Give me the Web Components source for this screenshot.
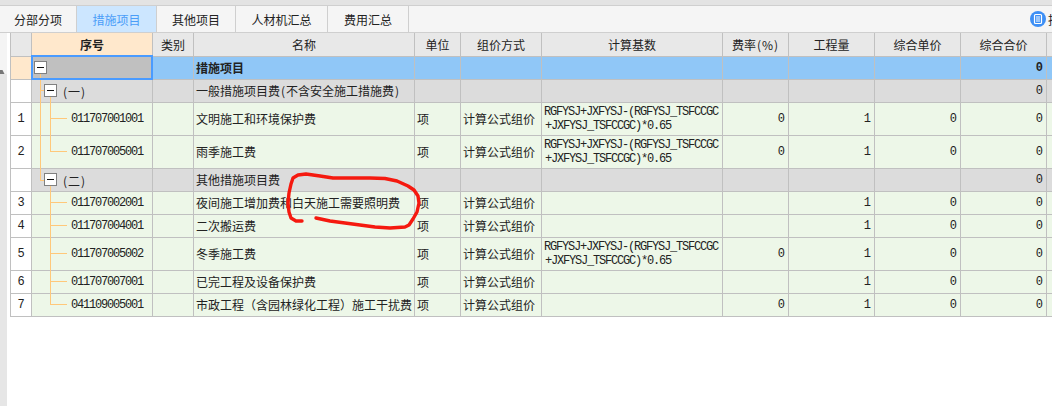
<!DOCTYPE html>
<html><head><meta charset="utf-8">
<style>
html,body{margin:0;padding:0;background:#fff;}
body{font:12px "Noto Sans CJK SC","Liberation Sans",sans-serif;color:#222;width:1052px;height:406px;overflow:hidden;
--cols:21px 121px 41px 221px 46px 81px 181px 66px 86px 86px 86px 5px;}
</style></head><body>
<app-shell>
  <tab-bar>
    <tab-item style="--w:77px">分部分项</tab-item>
    <tab-item active style="--w:80px">措施项目</tab-item>
    <tab-item style="--w:79px">其他项目</tab-item>
    <tab-item style="--w:92px">人材机汇总</tab-item>
    <tab-item style="--w:81px">费用汇总</tab-item>
  </tab-bar>
  <work-area></work-area>
</app-shell>
<script>
class AppShell extends HTMLElement{constructor(){super();this.attachShadow({mode:'open'}).innerHTML=`<style>:host{display:flex;flex-direction:column;width:1052px;height:406px;overflow:hidden}</style><slot></slot>`;}}
class TabBar extends HTMLElement{constructor(){super();this.attachShadow({mode:'open'}).innerHTML=`<style>
:host{display:block;background:#e3e3e3;padding-top:5px}
.bar{display:flex;height:26px;background:#f5f5f5;border-top:1px solid #cfcfcf;border-bottom:1px solid #cfcfcf;align-items:stretch;overflow:hidden}
.tabs{display:flex;flex:1}
.tail{display:flex;align-items:center;gap:2px;width:22px;flex:none;font-size:12px;white-space:nowrap;overflow:hidden;color:#222;box-sizing:border-box}
svg{flex:none;display:block}
</style><div class="bar"><div class="tabs"><slot></slot></div><div class="tail"><svg width="16" height="16" viewBox="0 0 16 16"><circle cx="8" cy="8" r="8" fill="#3d8ff5"/><rect x="4.5" y="3.5" width="7" height="9" rx="1" fill="none" stroke="#fff" stroke-width="1.2"/><path d="M6 6h4M6 8h4M6 10h4" stroke="#fff" stroke-width="1"/></svg><span>指</span></div></div>`;}}
class TabItem extends HTMLElement{constructor(){super();this.attachShadow({mode:'open'}).innerHTML=`<style>
:host{display:flex;align-items:center;justify-content:center;box-sizing:border-box;width:var(--w);border-right:1px solid #cfcfcf;color:#222;font-size:12px;}
:host([active]){background:#cce6ff;color:#4a9df8}
</style><slot></slot>`;}}
class WorkArea extends HTMLElement{constructor(){super();this.attachShadow({mode:'open'}).innerHTML=`<style>
:host{display:flex;flex:1;min-height:0}
.strip{width:7px;flex:none;display:flex;flex-direction:column}
.up{height:37px;background:#f4f4f4;flex:none}
.tri{height:4px;flex:none;background:#f4f4f4}
.down{flex:1;background:#e6e6e6}
.gap{width:3px;flex:none}
svg{display:block}
</style><div class="strip"><div class="up"></div><div class="tri"><svg width="5" height="4" viewBox="0 0 5 4"><path d="M0 4H4.500L2.500 0H0Z" fill="#777"/></svg></div><div class="down"></div></div><div class="gap"></div><measure-grid></measure-grid>`;}}
const N='计算公式组价';
const F1='RGFYSJ+JXFYSJ-(RGFYSJ_TSFCCGC',F2='+JXFYSJ_TSFCCGC)*0.65';
const P=s=>s.replace(/[()]/g,m=>`<span class="p">${m}</span>`);
const ROWS=[
 {k:'total',h:23,name:'措施项目',tot:'0'},
 {k:'group',h:23,code:'(一)',name:'一般措施项目费(不含安全施工措施费)',tot:'0'},
 {k:'item',h:33,n:'1',code:'011707001001',name:'文明施工和环境保护费',f:1,rate:'0',qty:'1'},
 {k:'item',h:33,n:'2',code:'011707005001',name:'雨季施工费',f:1,rate:'0',qty:'1'},
 {k:'group',h:23,code:'(二)',name:'其他措施项目费',tot:'0'},
 {k:'item',h:23,n:'3',code:'011707002001',name:'夜间施工增加费和白天施工需要照明费',qty:'1'},
 {k:'item',h:23,n:'4',code:'011707004001',name:'二次搬运费',qty:'1'},
 {k:'item',h:33,n:'5',code:'011707005002',name:'冬季施工费',f:1,rate:'0',qty:'1'},
 {k:'item',h:23,n:'6',code:'011707007001',name:'已完工程及设备保护费',qty:'1'},
 {k:'item',h:23,n:'7',code:'041109005001',name:'市政工程（含园林绿化工程）施工干扰费',rate:'0',qty:'1'}
];
class MeasureGrid extends HTMLElement{constructor(){super();const r=this.attachShadow({mode:'open'});
 r.innerHTML=`<style>
:host{display:block;position:relative;flex:1;min-width:0}
.frame{border-left:1px solid #c0c0c0}
svg{position:absolute;left:0;top:0;pointer-events:none}
</style><div class="frame"><grid-row kind="head" style="--h:24px"></grid-row></div>
<svg width="1042" height="300" viewBox="10 33 1042 300">
<g fill="none" stroke="#ffc87a" stroke-width="1" shape-rendering="crispEdges">
<path d="M40.500 74V180.500H44M40.500 90.500H44"/>
<path d="M50.500 97V151.500H67M50.500 118.500H67"/>
<path d="M50.500 186V304.500H67M50.500 202.500H67M50.500 225.500H67M50.500 253.500H67M50.500 281.500H67"/>
</g>
<rect x="32" y="56" width="120" height="23" fill="none" stroke="#4a9bff" stroke-width="2"/>
${[[34,61],[44,84],[44,173]].map(([x,y])=>`<rect x="${x+.5}" y="${y+.5}" width="12" height="12" fill="#fff" stroke="#808080"/><path d="M${x+3} ${y+6.5}h7" stroke="#111" shape-rendering="crispEdges"/>`).join('')}
<polyline points="302,221 296,221 291,218 289,212 288,203 289,193 291,184 293,178 298,175 306,174 320,176 333,178 350,178 370,178 385,178.500 397,181 408,186 414,190 418,196 419,203 417,212 413,219 409,225 405,227 390,228 375,227 360,225 345,223 330,221 316,218" fill="none" stroke="#f5190f" stroke-width="3.4" stroke-linejoin="round" stroke-linecap="round"/>
</svg>`;
 const frame=r.querySelector('.frame');
 ROWS.forEach(d=>{const e=document.createElement('grid-row');e.setAttribute('kind',d.k);e.style.setProperty('--h',d.h+'px');e.data=d;frame.appendChild(e);});
}}
class GridRow extends HTMLElement{
 connectedCallback(){
  const k=this.getAttribute('kind');const d=this.data||{};
  const r=this.shadowRoot||this.attachShadow({mode:'open'});
  let cells;
  if(k==='head'){
   cells=['','序号','类别','名称','单位','组价方式','计算基数','费率(%)','工程量','综合单价','综合合价',''].map((t,i)=>`<div class="c hd ${i==1?'seq':''}">${P(t)}</div>`).join('');
  }else{
   const formula=d.f?`<div class="f">${F1}<br><span class="f2">${F2}</span></div>`:'';
   const isItem=k==='item';
   cells=`<div class="c no ${k==='total'?'sel':''}">${d.n||''}</div>
   <div class="c code ${k}">${d.code?P(d.code):''}</div><div class="c"></div>
   <div class="c l name">${P(d.name)}</div>
   <div class="c l">${isItem?'项':''}</div>
   <div class="c l">${isItem?N:''}</div>
   <div class="c fc">${formula}</div>
   <div class="c r">${d.rate||''}</div>
   <div class="c r">${d.qty||''}</div>
   <div class="c r">${isItem?'0':''}</div>
   <div class="c r">${isItem?'0':d.tot}</div>
   <div class="c end"></div>`;
  }
  r.innerHTML=`<style>
:host{display:grid;grid-template-columns:var(--cols);height:var(--h,23px);color:#222;font-size:12px}
:host([kind=total]){--bg:#90c7f7;font-weight:bold}
:host([kind=group]){--bg:#dcdcdc}
:host([kind=item]){--bg:#edf7e8}
:host([kind=head]){--bg:#e8e8e8}
.c{box-sizing:border-box;background:var(--bg);border-right:1px solid #c0c0c0;border-bottom:1px solid #c0c0c0;display:flex;align-items:center;min-width:0;white-space:nowrap;overflow:hidden;line-height:14px}
.c:last-child{border-right:0}
.p{display:inline-block;width:6px;text-align:center}
.hd{justify-content:center}
.hd.seq{background:#ffe8cc;font-weight:bold}
.no{background:#fff;justify-content:center;font:12px "Liberation Mono",monospace;font-weight:normal}
.no.sel{background:#ffe8cc}
.code{font:12px "Liberation Mono",monospace;letter-spacing:-1.2px;font-weight:normal;padding-left:39px}
.code.total{background:#c0c0c0}
.code.group{font:12px "Noto Sans CJK SC",sans-serif;letter-spacing:0;padding-left:30px}
.l{padding-left:2px}
.r{justify-content:flex-end;padding-right:3px;font-family:"Liberation Mono",monospace;font-size:12px}
.f{font:12px/14px "Liberation Mono",monospace;letter-spacing:-1.2px;padding-left:2px;color:#222}
.f2{margin-left:1px}
</style>${cells}`;
 }
}
customElements.define('app-shell',AppShell);
customElements.define('tab-bar',TabBar);
customElements.define('tab-item',TabItem);
customElements.define('grid-row',GridRow);
customElements.define('measure-grid',MeasureGrid);
customElements.define('work-area',WorkArea);
</script>
</body></html>
